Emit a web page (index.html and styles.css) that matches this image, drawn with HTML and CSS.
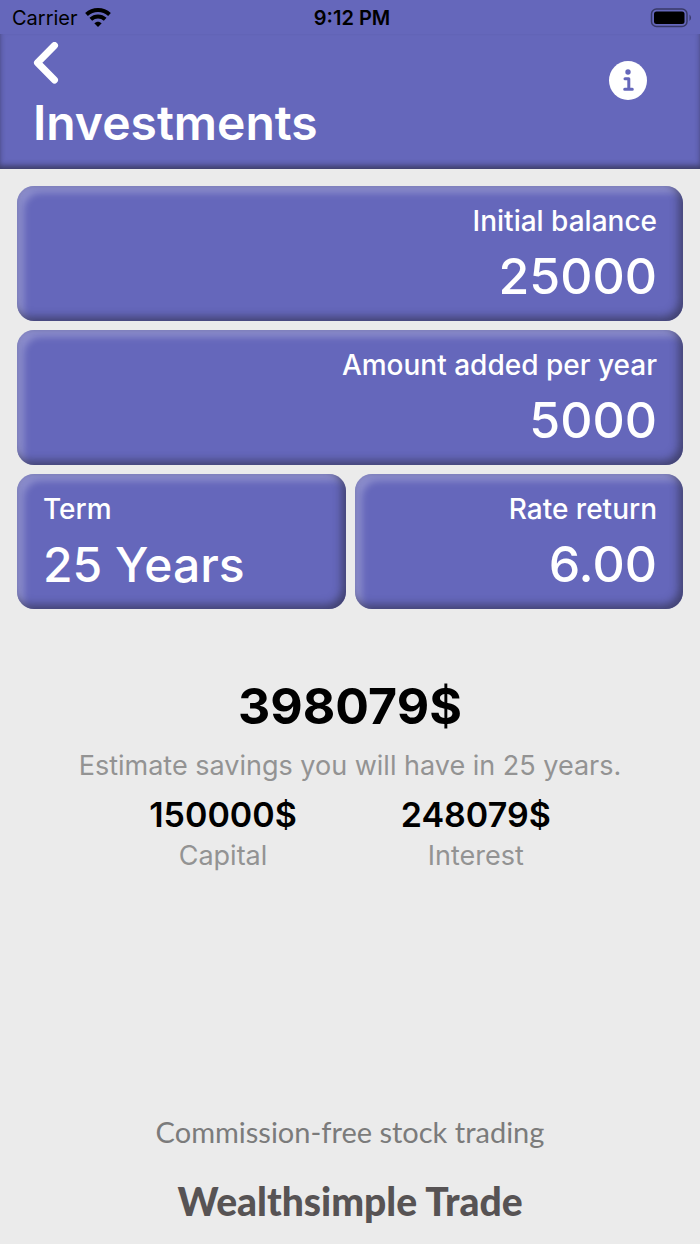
FILE: index.html
```html
<!DOCTYPE html>
<html lang="en">
<head>
    <meta charset="UTF-8">
    <meta name="viewport" content="width=device-width, initial-scale=1.0">
    <title>Investments</title>
    <link rel="stylesheet" href="styles.css">
</head>
<body>
    <div class="status-bar">
        <div class="carrier">
            <span>Carrier</span>
            <svg width="26" height="19" viewBox="0 0 26 19" aria-hidden="true">
                <path d="M1.500 6.500C8 .5 18 .5 24.500 6.500" fill="none" stroke="#000" stroke-width="4"/>
                <path d="M5.800 11.300C10 7.500 16 7.500 20.200 11.300" fill="none" stroke="#000" stroke-width="4"/>
                <path d="M9.300 15.300C11.500 13.200 14.500 13.200 16.700 15.300L13 19Z"/>
            </svg>
        </div>
        <span class="time">9:12 PM</span>
        <svg class="battery" width="42" height="20" viewBox="0 0 42 20" aria-hidden="true">
            <rect x="1.500" y="1" width="35.500" height="17.500" rx="5" fill="none" stroke="#000" stroke-opacity=".45" stroke-width="1.500"/>
            <rect x="4" y="3.500" width="30.500" height="12.500" rx="2.500"/>
            <path d="M39.500 6.500q3 3.200 0 6.500z" fill-opacity=".45"/>
        </svg>
    </div>

    <header class="header">
        <div>
            <button type="button" class="icon-btn" aria-label="Back">
                <svg width="26" height="42" viewBox="0 0 26 42">
                    <path d="M21.500 3.500L4.500 20.800L21.500 38" fill="none" stroke="#fff" stroke-width="7" stroke-linecap="round" stroke-linejoin="round"/>
                </svg>
            </button>
            <h1>Investments</h1>
        </div>
        <button type="button" class="icon-btn info-btn" aria-label="Info">
            <svg width="38" height="39" viewBox="0 0 38 39">
                <ellipse cx="19" cy="19.500" rx="19" ry="19.500" fill="#fff"/>
                <circle cx="19" cy="11" r="2.700" fill="#6567bb"/>
                <path d="M16 17.800H19.800V28M15.700 28.300H23.300" fill="none" stroke="#6567bb" stroke-width="3" stroke-linecap="round" stroke-linejoin="round"/>
            </svg>
        </button>
    </header>

    <form class="form">
        <div class="card">
            <label for="balance">Initial balance</label>
            <input type="text" id="balance" value="25000">
        </div>
        <div class="card">
            <label for="added">Amount added per year</label>
            <input type="text" id="added" value="5000">
        </div>
        <div class="card-row">
            <div class="card card-left">
                <label for="term">Term</label>
                <select id="term">
                    <option>5 Years</option>
                    <option>10 Years</option>
                    <option selected>25 Years</option>
                </select>
            </div>
            <div class="card">
                <label for="rate">Rate return</label>
                <input type="text" id="rate" value="6.00">
            </div>
        </div>
    </form>

    <main class="results">
        <p class="total">398079$</p>
        <p class="caption">Estimate savings you will have in 25 years.</p>
        <div class="split">
            <div>
                <p class="amount">150000$</p>
                <p class="caption">Capital</p>
            </div>
            <div>
                <p class="amount">248079$</p>
                <p class="caption">Interest</p>
            </div>
        </div>
    </main>

    <footer class="footer">
        <p>Commission-free stock trading</p>
        <a href="#">Wealthsimple Trade</a>
    </footer>
</body>
</html>
```
FILE: styles.css
```css
* {
    box-sizing: border-box;
}

body {
    font-family: 'Inter', sans-serif;
    margin: 0;
    min-height: 100vh;
    display: flex;
    flex-direction: column;
    background-color: #ebebeb;
    color: #000;
}

h1, p {
    margin: 0;
}

.status-bar {
    display: grid;
    grid-template-columns: 1fr auto 1fr;
    align-items: center;
    height: 34px;
    padding: 1px 8px 0 12px;
    background-color: #6567bb;
    font-size: 20px;
}

.carrier {
    display: flex;
    align-items: center;
    gap: 7px;
}

.time {
    font-weight: 600;
}

.battery {
    justify-self: end;
}

.header {
    display: flex;
    justify-content: space-between;
    align-items: flex-start;
    padding: 8px 53px 16px 33px;
    background-color: #6567bb;
    color: #fff;
    box-shadow: inset 0 -4px 5px -1px rgba(50, 50, 80, 0.7), inset 0 -4px 6px rgba(50, 50, 80, 0.2);
}

.header h1 {
    font-size: 48px;
    font-weight: 600;
    line-height: 60px;
    margin-top: 9px;
}

.icon-btn {
    display: block;
    padding: 0;
    border: none;
    background: none;
    cursor: pointer;
}

.icon-btn svg {
    display: block;
}

.info-btn {
    margin-top: 19px;
}

.form {
    display: flex;
    flex-direction: column;
    gap: 9px;
    padding: 17px;
}

.card-row {
    display: grid;
    grid-template-columns: 1fr 1fr;
    gap: 9px;
}

.card {
    display: flex;
    flex-direction: column;
    padding: 17px 26px 15px;
    border-radius: 17px;
    background-color: #6567bb;
    color: #fff;
    text-align: right;
    box-shadow: inset -4px -4px 8px rgba(50, 50, 80, 0.7), inset 7px 7px 7px rgba(255, 255, 255, 0.25);
}

.card label {
    font-size: 28px;
    font-weight: 500;
    line-height: 36px;
}

.card input, .card select {
    width: 100%;
    height: 60px;
    margin-top: 7px;
    padding: 0;
    border: none;
    background: none;
    appearance: none;
    color: #fff;
    font-family: inherit;
    font-size: 50px;
    font-weight: 500;
    text-align: inherit;
}

.card select {
    font-size: 48px;
}

.card-left {
    text-align: left;
}

.results {
    flex: 1;
    padding-top: 48px;
    text-align: center;
}

.total {
    font-size: 50px;
    font-weight: 700;
    line-height: 64px;
}

.caption {
    font-size: 27px;
    line-height: 40px;
    color: #939393;
}

.total + .caption {
    margin-top: 8px;
}

.split {
    display: flex;
    justify-content: center;
    gap: 104px;
    margin-top: 8px;
}

.amount {
    font-size: 34px;
    font-weight: 600;
    line-height: 42px;
}

.footer {
    padding-bottom: 18px;
    font-family: 'Lato', sans-serif;
    text-align: center;
}

.footer p {
    font-size: 29px;
    line-height: 40px;
    color: #7b7b7b;
}

.footer a {
    display: block;
    margin-top: 24px;
    color: #575354;
    font-size: 39px;
    font-weight: 900;
    line-height: 50px;
    text-decoration: none;
}
```
